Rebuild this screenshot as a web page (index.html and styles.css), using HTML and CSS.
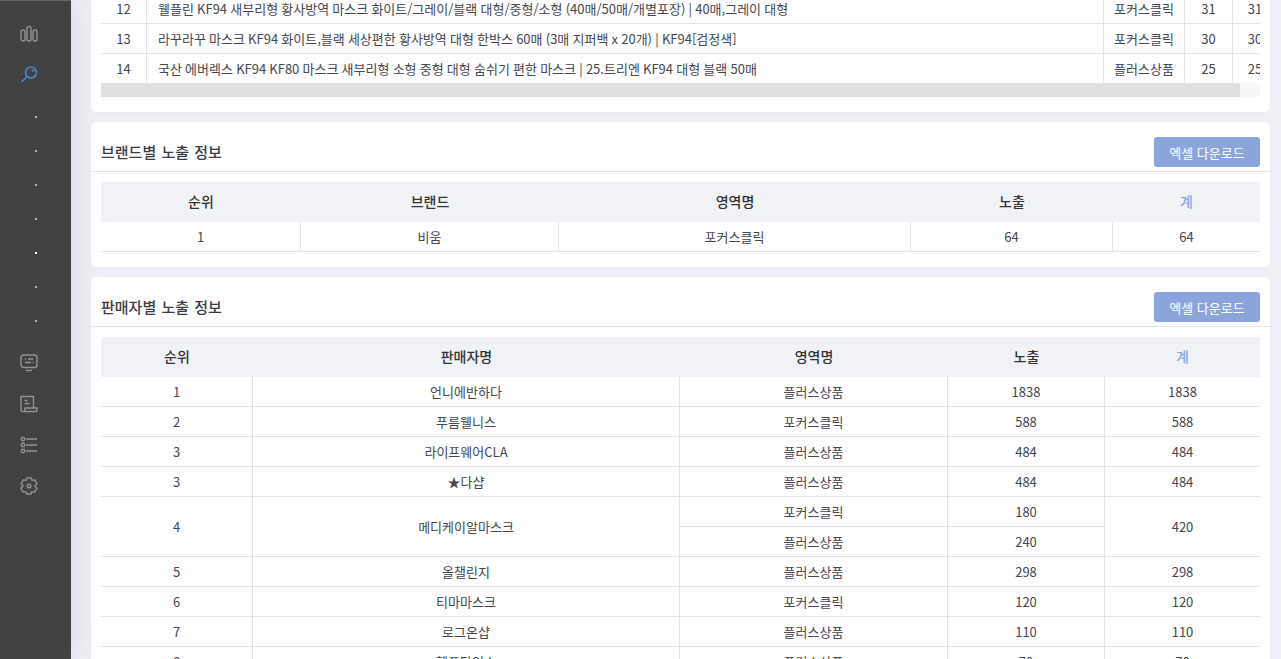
FILE: index.html
```html
<!DOCTYPE html>
<html lang="ko">
<head>
    <meta charset="UTF-8">
    <meta name="viewport" content="width=device-width, initial-scale=1.0">
    <title>노출 정보</title>
    <link rel="stylesheet" href="styles.css">
</head>
<body>
    <aside class="sidebar">
        <div class="nav-item">
            <svg class="icon" viewBox="0 0 18 18"><rect x="1" y="5" width="4" height="11" rx="2"/><rect x="7" y="1.500" width="4" height="14.500" rx="2"/><rect x="13" y="5" width="4" height="11" rx="2"/></svg>
        </div>
        <div class="nav-item nav-active">
            <svg class="icon" viewBox="0 0 18 18"><circle cx="11" cy="6.500" r="5.500"/><path d="M7 10.500 1.500 16"/><path d="M11.500 3.500a3 3 0 0 1 2.500 2.500"/></svg>
        </div>
        <ul class="submenu">
            <li><span class="dot"></span></li>
            <li><span class="dot"></span></li>
            <li><span class="dot"></span></li>
            <li><span class="dot"></span></li>
            <li><span class="dot dot-on"></span></li>
            <li><span class="dot"></span></li>
            <li><span class="dot"></span></li>
        </ul>
        <div class="nav-item">
            <svg class="icon" viewBox="0 0 18 18"><rect x="1" y="1" width="16" height="12.500" rx="2.500"/><path d="M6 16.500h6M5 5h1M8 5h5M5 8.500h6M12.500 8.500h1"/></svg>
        </div>
        <div class="nav-item">
            <svg class="icon" viewBox="0 0 18 18"><path d="M3.500 16.500H2.500a1.500 1.500 0 0 1-1.500-1.500V1.500h12.500v11.500"/><path d="M3.500 16.500a1.500 1.500 0 0 0 1.500-1.500v-2h12v2a1.500 1.500 0 0 1-1.500 1.500z"/><path d="M4.500 5.500h3M4.500 8.500h5"/></svg>
        </div>
        <div class="nav-item">
            <svg class="icon" viewBox="0 0 18 18"><circle cx="3" cy="3" r="1.700"/><circle cx="3" cy="9" r="1.700"/><circle cx="3" cy="15" r="1.700"/><path d="M6 3h11M6 9h11M6 15h11"/></svg>
        </div>
        <div class="nav-item">
            <svg class="icon" viewBox="0 0 18 18"><circle cx="9" cy="9" r="1.800"/><path d="M6.800 1h4.400l.9 2.400 2.700-.5 2.200 3.800L14.900 9l1.900 2.300-2.200 3.800-2.700-.5-.9 2.400H6.800l-.9-2.400-2.700.5L1 11.300 3.100 9 1.200 6.700l2.200-3.800 2.700.5z" stroke-linejoin="round"/></svg>
        </div>
    </aside>

    <main class="content">
        <section class="card card-first">
            <div class="table-clip">
                <table class="data-table table-products">
                    <colgroup>
                        <col class="p-no"><col class="p-name"><col class="p-area"><col class="p-num"><col class="p-last">
                    </colgroup>
                    <tr>
                        <td>12</td>
                        <td class="left">웰플린 KF94 새부리형 황사방역 마스크 화이트/그레이/블랙 대형/중형/소형 (40매/50매/개별포장) | 40매,그레이 대형</td>
                        <td>포커스클릭</td><td>31</td><td>31</td>
                    </tr>
                    <tr>
                        <td>13</td>
                        <td class="left">라꾸라꾸 마스크 KF94 화이트,블랙 세상편한 황사방역 대형 한박스 60매 (3매 지퍼백 x 20개) | KF94[검정색]</td>
                        <td>포커스클릭</td><td>30</td><td>30</td>
                    </tr>
                    <tr>
                        <td>14</td>
                        <td class="left">국산 에버렉스 KF94 KF80 마스크 새부리형 소형 중형 대형 숨쉬기 편한 마스크 | 25.트리엔 KF94 대형 블랙 50매</td>
                        <td>플러스상품</td><td>25</td><td>25</td>
                    </tr>
                </table>
            </div>
            <div class="scroll-track"><div class="scroll-thumb"></div></div>
        </section>

        <section class="card">
            <div class="card-head">
                <h3>브랜드별 노출 정보</h3>
                <button type="button" class="btn-excel">엑셀 다운로드</button>
            </div>
            <div class="card-body">
                <table class="data-table table-brand">
                    <colgroup>
                        <col class="b-1"><col class="b-2"><col class="b-3"><col class="b-4"><col class="b-5">
                    </colgroup>
                    <tr><th>순위</th><th>브랜드</th><th>영역명</th><th>노출</th><th class="th-sum">계</th></tr>
                    <tr><td>1</td><td>비움</td><td>포커스클릭</td><td>64</td><td>64</td></tr>
                </table>
            </div>
        </section>

        <section class="card">
            <div class="card-head">
                <h3>판매자별 노출 정보</h3>
                <button type="button" class="btn-excel">엑셀 다운로드</button>
            </div>
            <div class="card-body">
                <table class="data-table table-seller">
                    <colgroup>
                        <col class="s-1"><col class="s-2"><col class="s-3"><col class="s-4"><col class="s-5">
                    </colgroup>
                    <tr><th>순위</th><th>판매자명</th><th>영역명</th><th>노출</th><th class="th-sum">계</th></tr>
                    <tr><td>1</td><td>언니에반하다</td><td>플러스상품</td><td>1838</td><td>1838</td></tr>
                    <tr><td>2</td><td>푸름웰니스</td><td>포커스클릭</td><td>588</td><td>588</td></tr>
                    <tr><td>3</td><td>라이프웨어CLA</td><td>플러스상품</td><td>484</td><td>484</td></tr>
                    <tr><td>3</td><td>★다샵</td><td>플러스상품</td><td>484</td><td>484</td></tr>
                    <tr><td rowspan="2">4</td><td rowspan="2">메디케이알마스크</td><td>포커스클릭</td><td>180</td><td rowspan="2">420</td></tr>
                    <tr><td>플러스상품</td><td class="cell-line">240</td></tr>
                    <tr><td>5</td><td>올챌린지</td><td>플러스상품</td><td>298</td><td>298</td></tr>
                    <tr><td>6</td><td>티마마스크</td><td>포커스클릭</td><td>120</td><td>120</td></tr>
                    <tr><td>7</td><td>로그온샵</td><td>플러스상품</td><td>110</td><td>110</td></tr>
                    <tr><td>8</td><td>헬프타임스</td><td>플러스상품</td><td>70</td><td>70</td></tr>
                </table>
            </div>
        </section>
    </main>
</body>
</html>
```

FILE: styles.css
```css
html, body {
    height: 100%;
}
body {
    margin: 0;
    display: flex;
    height: 659px;
    overflow: hidden;
    background-color: #f0f1f7;
    color: #45464e;
    font-family: "Noto Sans CJK KR", "Liberation Sans", sans-serif;
    font-size: 13px;
}

/* 왼쪽 메뉴 */
.sidebar {
    flex: 0 0 71px;
    box-sizing: border-box;
    padding-top: 12px;
    background-color: #424242;
    border-top: 1px solid #666;
    box-shadow: 0 0 32px rgba(0, 0, 0, .12);
    position: relative;
    z-index: 2;
}
.nav-item {
    height: 41px;
    padding-left: 20px;
    display: flex;
    align-items: center;
}
.icon {
    width: 18px;
    height: 18px;
    fill: none;
    stroke: #929292;
    stroke-width: 1.4;
}
.nav-active .icon {
    stroke: #4a86d6;
    stroke-width: 1.5;
}
.submenu {
    list-style: none;
    margin: 5px 0 4px;
    padding: 0;
}
.submenu li {
    height: 34px;
    padding-left: 35px;
    display: flex;
    align-items: center;
}
.dot {
    width: 2px;
    height: 2px;
    background-color: #b5b5b5;
}
.dot-on {
    background-color: #fff;
}

/* 본문 */
.content {
    flex: 1;
    min-width: 0;
    padding: 0 11px 0 20px;
}
.card {
    background-color: #fff;
    border-radius: 5px;
    box-shadow: 0 1px 10px rgba(69, 65, 78, .03);
    margin-bottom: 10px;
}
.card-first {
    padding: 0 10px 15px;
    border-radius: 0 0 5px 5px;
}
.table-clip {
    height: 83px;
    overflow: hidden;
}
.scroll-track {
    height: 14px;
    background-color: #f8f8f8;
}
.scroll-thumb {
    width: 1139px;
    height: 14px;
    background-color: #e0e0e0;
}
.card-head {
    box-sizing: border-box;
    height: 50px;
    padding: 15px 10px 4px;
    border-bottom: 1px solid #e4e4e4;
    display: flex;
    align-items: center;
    justify-content: space-between;
}
.card-head h3 {
    margin: 0 0 2px;
    font-size: 15px;
    font-weight: 500;
    word-spacing: 1px;
    color: #3b3c42;
}
.btn-excel {
    width: 106px;
    height: 30px;
    padding: 0;
    border: none;
    border-radius: 3px;
    background-color: #8ba5dc;
    color: #fff;
    font-family: inherit;
    font-size: 13px;
    cursor: pointer;
}
.card-body {
    padding: 10px 10px 15px;
}

/* 표 */
.data-table {
    width: 100%;
    table-layout: fixed;
    border-collapse: separate;
    border-spacing: 0;
    text-align: center;
}
.data-table th {
    box-sizing: border-box;
    height: 40px;
    padding: 0 8px 3px;
    background-color: #f1f2f6;
    font-size: 14px;
    font-weight: 500;
    color: #333;
}
.data-table .th-sum {
    color: #8ba5dc;
}
.data-table td {
    box-sizing: border-box;
    height: 30px;
    padding: 0 8px;
    border-bottom: 1px solid #e4e4e4;
    border-right: 1px solid #e4e4e4;
    white-space: nowrap;
}
.data-table td:last-child {
    border-right: none;
}
.data-table td.cell-line {
    border-right: 1px solid #e4e4e4;
}
.data-table .left {
    text-align: left;
    padding-left: 11px;
    word-spacing: -.45px;
}
.table-products {
    width: 1176px;
    margin-top: -6px;
}
.p-no { width: 46px; }
.p-name { width: 957px; }
.p-area { width: 81px; }
.p-num { width: 48px; }
.p-last { width: 44px; }

.b-1 { width: 200px; }
.b-2 { width: 258px; }
.b-3 { width: 352px; }
.b-4 { width: 202px; }
.b-5 { width: 147px; }

.s-1 { width: 152px; }
.s-2 { width: 427px; }
.s-3 { width: 268px; }
.s-4 { width: 157px; }
.s-5 { width: 155px; }
```
